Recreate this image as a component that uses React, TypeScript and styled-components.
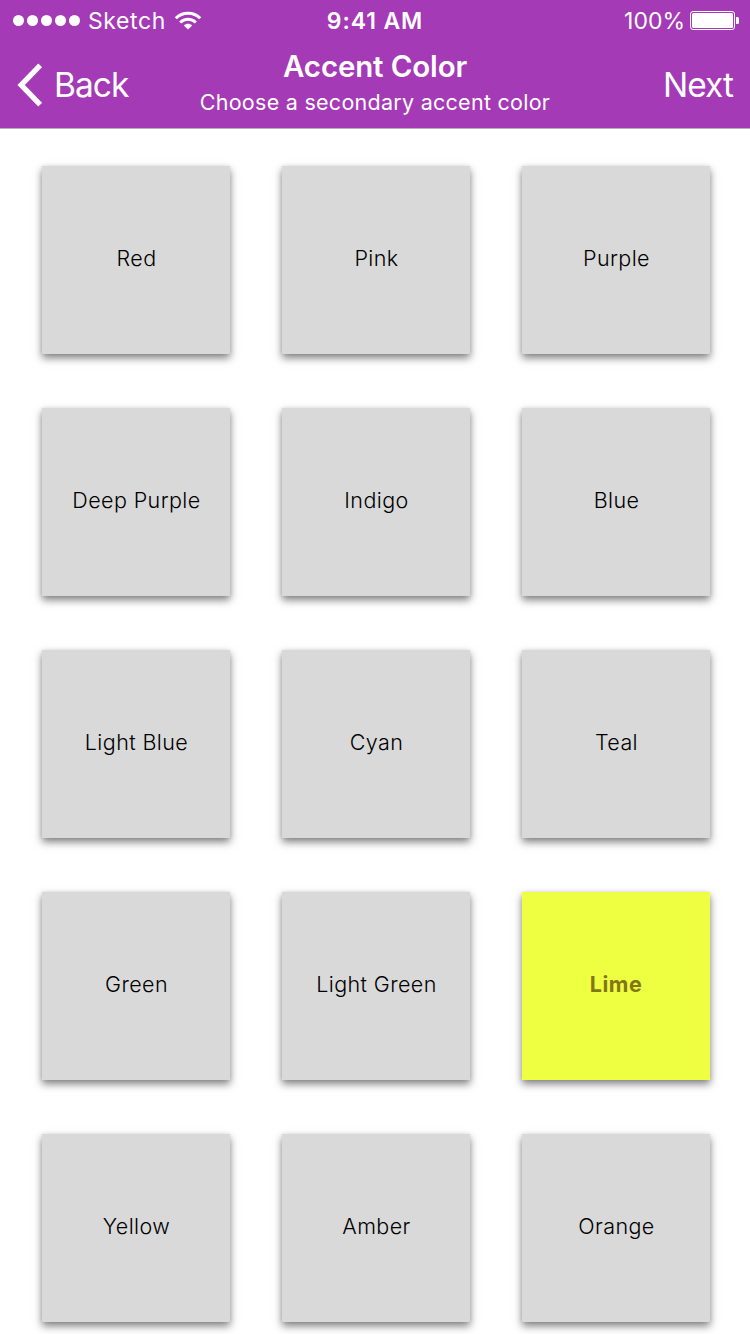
import React from "react";
import styled, { createGlobalStyle } from "styled-components";

const GlobalStyle = createGlobalStyle`
  * { box-sizing: border-box; }
  body {
    margin: 0;
    background: #fff;
    font-family: Inter, "Liberation Sans", sans-serif;
    overflow: hidden;
  }
`;

const Screen = styled.div`
  width: 750px;
  height: 1334px;
  overflow: hidden;
  background: #fff;
`;

const Header = styled.header`
  height: 129px;
  color: #fff;
  background: #a43ab5;
  border-bottom: 1px solid #b2b2b2;
`;

const StatusBar = styled.div`
  display: grid;
  grid-template-columns: 1fr auto 1fr;
  align-items: center;
  height: 40px;
  padding: 0 11px 0 13px;
`;

const Carrier = styled.div`
  display: flex;
  align-items: center;
`;

const SignalDots = styled.div`
  display: flex;
  gap: 3px;
  margin-right: 8px;
`;

const Dot = styled.span`
  width: 11px;
  height: 11px;
  border-radius: 50%;
  background: #fff;
`;

const StatusText = styled.span<{ $weight?: number; $spacing?: number }>`
  padding-top: 1px;
  font-size: 23px;
  line-height: 40px;
  font-weight: ${(p) => p.$weight ?? 400};
  letter-spacing: ${(p) => p.$spacing ?? 0}px;
  white-space: nowrap;
`;

const Clock = styled(StatusText)`
  padding-right: 2px;
`;

const Wifi = styled.svg`
  margin-left: 8px;
`;

const Power = styled.div`
  display: flex;
  align-items: center;
  justify-content: flex-end;
  gap: 5px;
`;

const NavBar = styled.nav`
  display: grid;
  grid-template-columns: 1fr auto 1fr;
  height: 88px;
  padding: 0 16px;
`;

const NavButton = styled.button<{ $end?: boolean }>`
  display: flex;
  align-items: center;
  justify-self: ${(p) => (p.$end ? "end" : "start")};
  gap: 12px;
  padding: ${(p) => (p.$end ? "2px 1px 0 0" : "2px 0 0")};
  border: 0;
  background: none;
  color: inherit;
  font: 400 33.5px/44px Inter, sans-serif;
  letter-spacing: -0.95px;
`;

const Titles = styled.div`
  text-align: center;
  padding-top: 8px;
`;

const Title = styled.h1`
  margin: 0;
  font-size: 29.5px;
  line-height: 36px;
  font-weight: 600;
  letter-spacing: -0.15px;
`;

const Subtitle = styled.p`
  margin: 0;
  font-size: 21.5px;
  line-height: 36px;
  font-weight: 400;
  letter-spacing: 0.27px;
`;

const Grid = styled.main`
  display: grid;
  grid-template-columns: repeat(3, 188px);
  grid-auto-rows: 188px;
  gap: 54px 52px;
  padding: 37px 42px;
`;

const Tile = styled.button<{ $selected?: boolean }>`
  display: flex;
  align-items: center;
  justify-content: center;
  padding: 0 0 5px ${(p) => (p.$selected ? 0 : 1)}px;
  border: 0;
  background: ${(p) => (p.$selected ? "#eeff41" : "#d9d9d9")};
  color: ${(p) => (p.$selected ? "#827717" : "#000")};
  box-shadow: 0 4px 8px rgba(0, 0, 0, 0.5), 0 0 4px rgba(0, 0, 0, 0.05);
  font-family: inherit;
  font-size: 21.5px;
  font-weight: ${(p) => (p.$selected ? 700 : 300)};
  letter-spacing: ${(p) => (p.$selected ? 0.5 : 0.4)}px;
`;

const colors = [
  "Red", "Pink", "Purple",
  "Deep Purple", "Indigo", "Blue",
  "Light Blue", "Cyan", "Teal",
  "Green", "Light Green", "Lime",
  "Yellow", "Amber", "Orange",
];

const selected = "Lime";

export default function App() {
  return (
    <Screen>
      <GlobalStyle />
      <Header>
        <StatusBar>
          <Carrier>
            <SignalDots>
              {[0, 1, 2, 3, 4].map((n) => <Dot key={n} />)}
            </SignalDots>
            <StatusText $spacing={0.6}>Sketch</StatusText>
            <Wifi width="28" height="20" viewBox="0 0 28 20" fill="none" stroke="#fff">
              <path d="M1.8 7.2C8.6 .5 19.4 .5 26.2 7.2" strokeWidth="3" />
              <path d="M6.2 11.4C10.5 7.2 17.5 7.2 21.8 11.4" strokeWidth="2.8" />
              <path d="M14 18.6L9.8 14.4C12.1 12.2 15.9 12.2 18.2 14.4Z" fill="#fff" stroke="none" />
            </Wifi>
          </Carrier>
          <Clock $weight={600} $spacing={0.9}>9:41 AM</Clock>
          <Power>
            <StatusText>100%</StatusText>
            <svg width="49" height="19" viewBox="0 0 49 19" fill="none">
              <rect x=".5" y=".5" width="44" height="18" rx="2.5" stroke="#fff" />
              <rect x="2" y="2" width="41" height="15" rx="1.5" fill="#fff" />
              <path d="M46 6h1.5q1.5 0 1.5 1.5v4q0 1.5-1.5 1.5H46z" fill="#fff" />
            </svg>
          </Power>
        </StatusBar>
        <NavBar>
          <NavButton>
            <svg width="26" height="44" viewBox="0 0 26 44" fill="none">
              <path d="M24.2 2.3L5.2 22l19 19.7" stroke="#fff" strokeWidth="5.4" />
            </svg>
            Back
          </NavButton>
          <Titles>
            <Title>Accent Color</Title>
            <Subtitle>Choose a secondary accent color</Subtitle>
          </Titles>
          <NavButton $end>Next</NavButton>
        </NavBar>
      </Header>
      <Grid>
        {colors.map((name) => (
          <Tile key={name} $selected={name === selected}>{name}</Tile>
        ))}
      </Grid>
    </Screen>
  );
}
